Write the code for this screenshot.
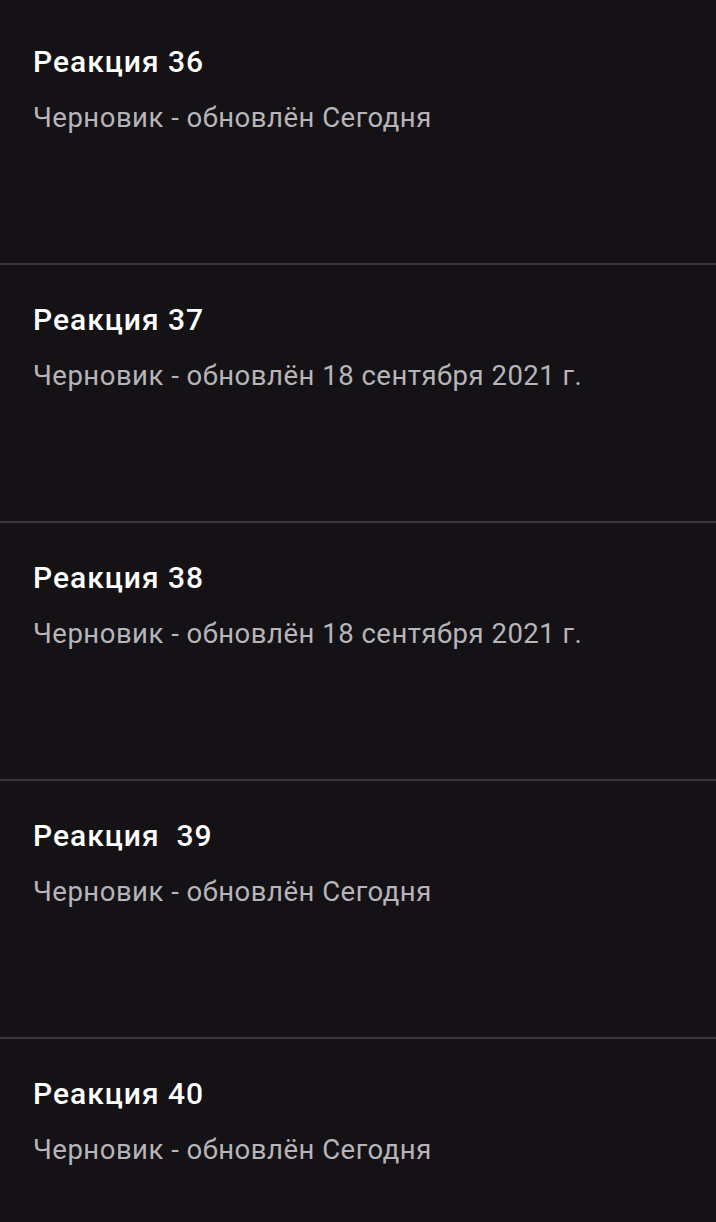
import React from 'react';

const drafts = [
  { id: 36, title: 'Реакция 36', updated: 'Сегодня' },
  { id: 37, title: 'Реакция 37', updated: '18 сентября 2021 г.' },
  { id: 38, title: 'Реакция 38', updated: '18 сентября 2021 г.' },
  { id: 39, title: 'Реакция \u00a039', updated: 'Сегодня' },
  { id: 40, title: 'Реакция 40', updated: 'Сегодня' },
];

export default function App() {
  return (
    <div className="h-screen bg-[#141215] pt-[7px] font-['Roboto',sans-serif] overflow-hidden">
      {drafts.map((d, i) => (
        <div key={d.id} className={i > 0 ? 'border-t-2 border-[#38363a]' : ''}>
          <div className="h-[256px] px-[33px] pt-[37px]">
            <div className="text-[30px] leading-[36px] tracking-[1px] font-medium text-white">{d.title}</div>
            <div className="mt-[20px] text-[27.5px] leading-[36px] tracking-[0.5px] text-[#b7b5b9]">
              Черновик - обновлён {d.updated}
            </div>
          </div>
        </div>
      ))}
    </div>
  );
}
